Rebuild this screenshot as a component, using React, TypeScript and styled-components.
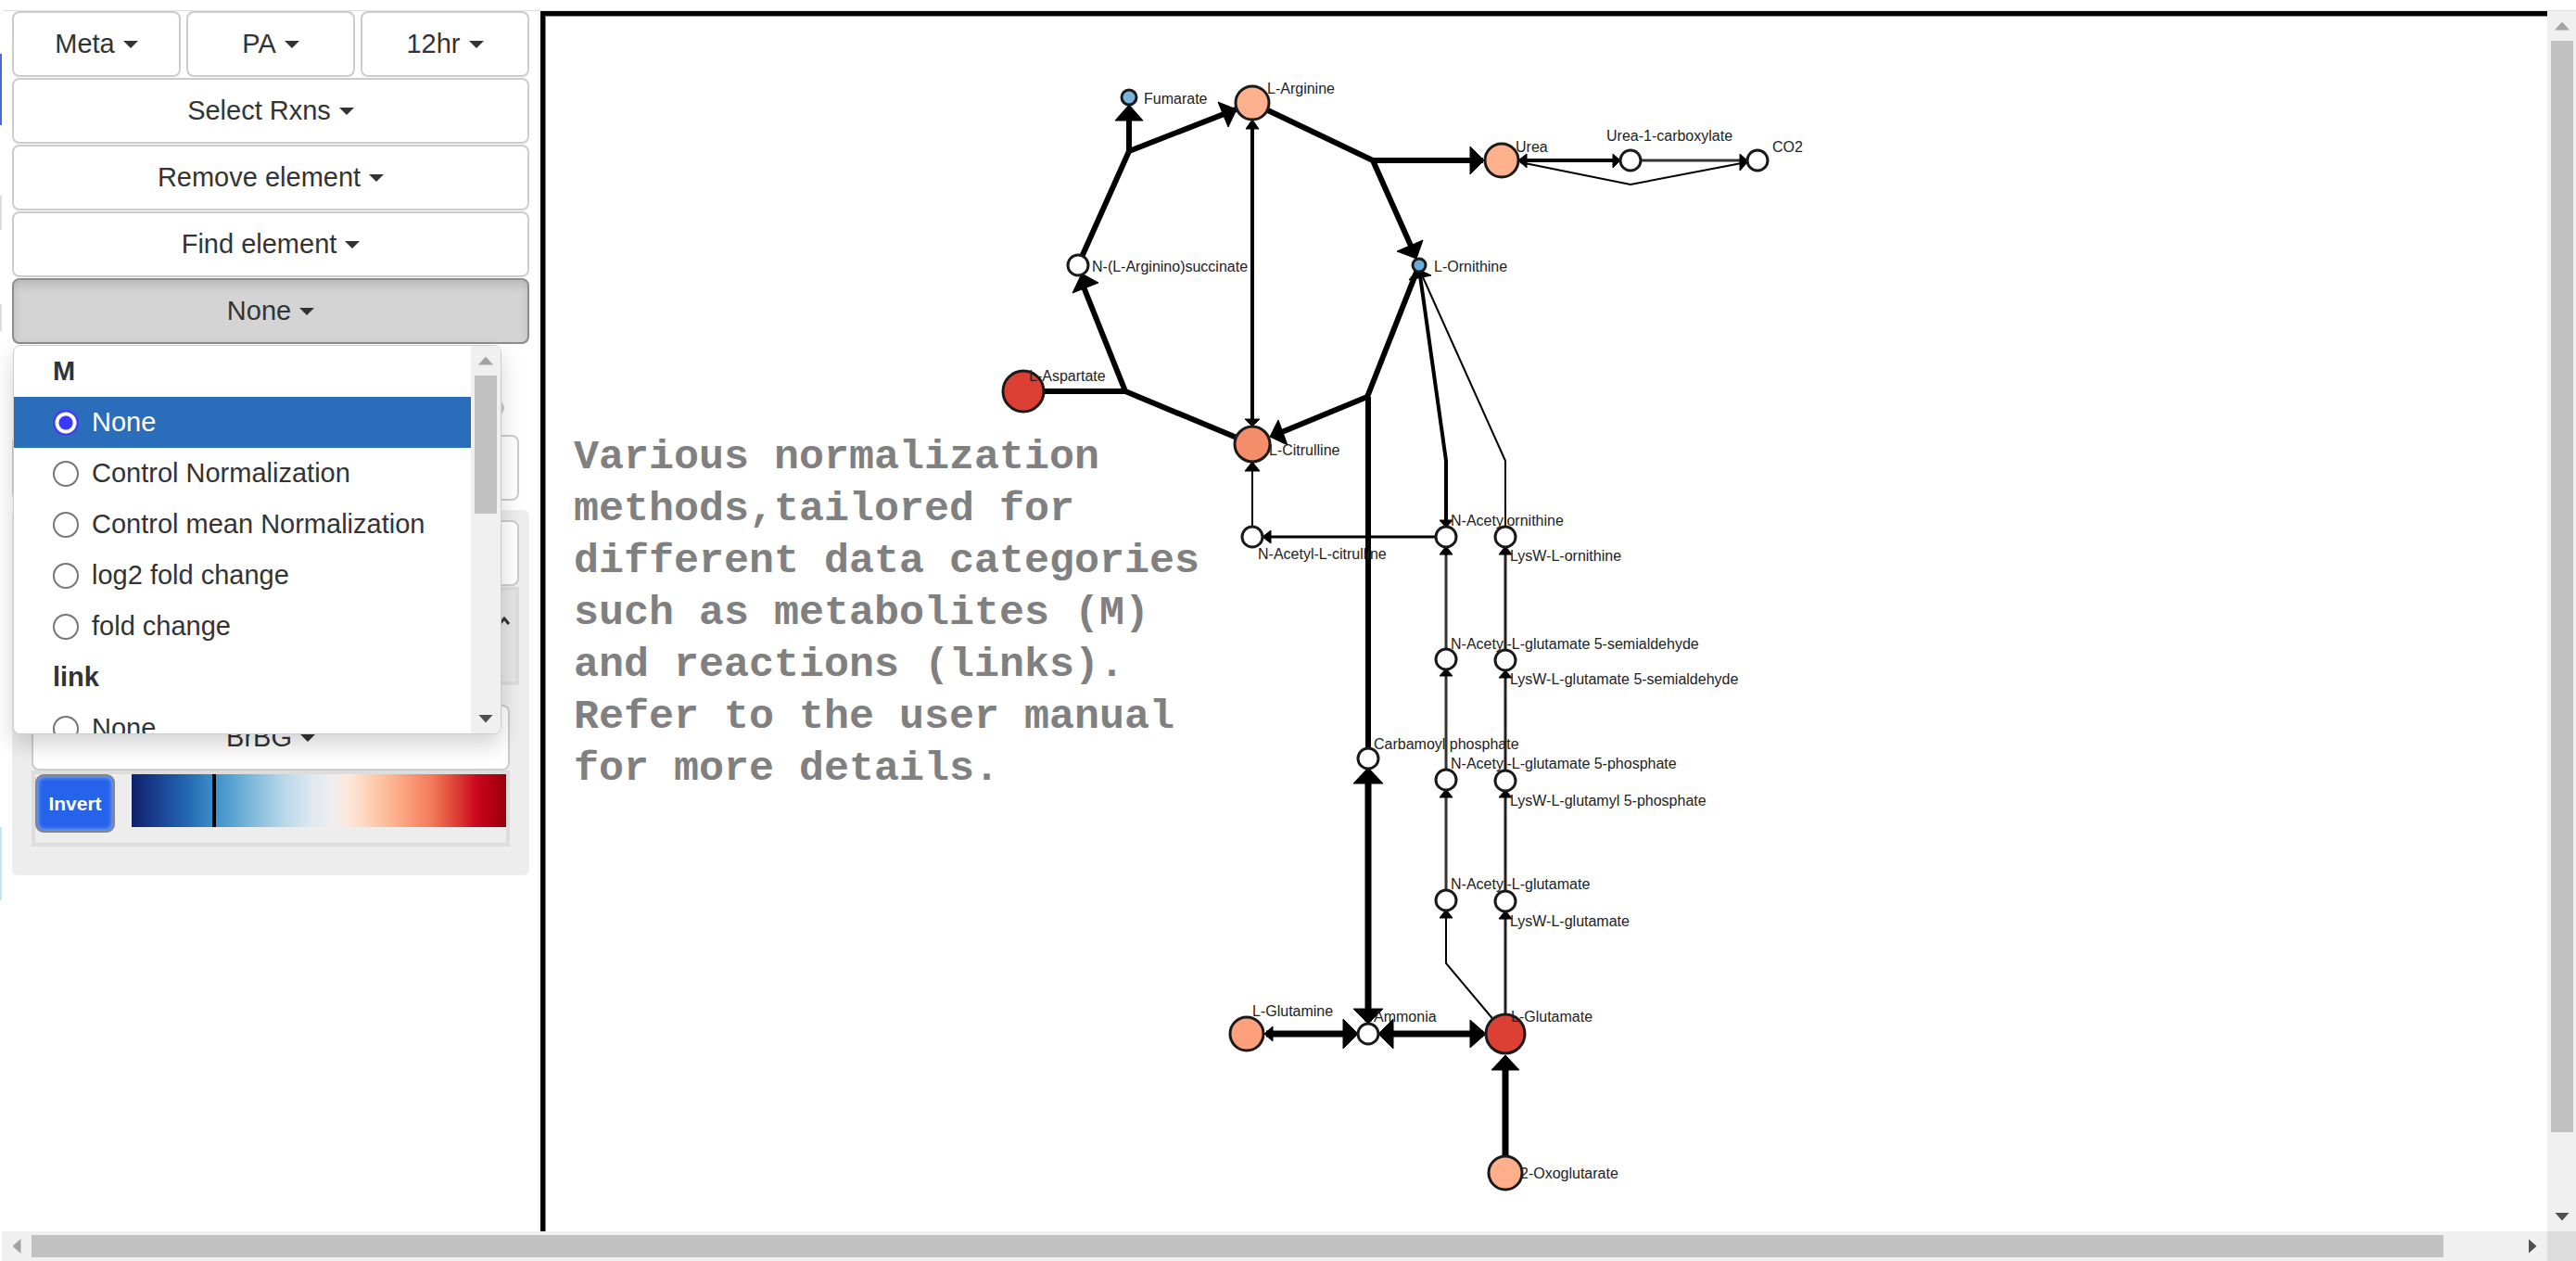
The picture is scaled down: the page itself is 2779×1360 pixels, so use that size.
import React, { useState } from "react";
import styled, { createGlobalStyle, css } from "styled-components";

const sans = `"Liberation Sans", Arial, Helvetica, sans-serif`;

const GlobalStyle = createGlobalStyle`
  *, *::before, *::after { box-sizing: border-box; }
  body { margin: 0; background: #fff; color: #333; font-family: ${sans}; }
`;

const Page = styled.div`
  display: grid;
  grid-template-columns: minmax(0, 1fr) 31px;
  grid-template-rows: 12px minmax(0, 1fr) 32px;
  height: 100vh;
  overflow: hidden;
`;

const TopEdge = styled.div`
  grid-column: 1 / -1;
  margin-left: 3px;
  border-bottom: 1px solid #ddd;
`;

const Workspace = styled.div`
  display: flex;
  min-width: 0;
`;

const EdgeStrip = styled.div`
  display: flex;
  flex-direction: column;
  flex: none;
  width: 2px;
`;

const EdgeMark = styled.span<{ $gap: number; $size: number; $color: string }>`
  flex: none;
  height: ${(p) => p.$size}px;
  margin-top: ${(p) => p.$gap}px;
  background: ${(p) => p.$color};
`;

const Sidebar = styled.aside`
  display: flex;
  flex-direction: column;
  flex: none;
  gap: 1px;
  width: 581px;
  padding: 0 12px 0 11px;
`;

const ButtonRow = styled.div`
  display: grid;
  grid-template-columns: repeat(3, 1fr);
  gap: 6px;
`;

const DropButton = styled.button<{ $open?: boolean }>`
  display: flex;
  align-items: center;
  justify-content: center;
  gap: 9px;
  width: 100%;
  height: 71px;
  padding: 0;
  border: 2px solid #ccc;
  border-radius: 8px;
  background: #fff;
  color: #333;
  font: 29px ${sans};
  white-space: nowrap;

  ${(p) =>
    p.$open &&
    css`
      border-color: #8c8c8c;
      background: #d4d4d4;
      box-shadow: inset 0 6px 10px rgba(0, 0, 0, 0.125);
    `}
`;

const Caret = styled.span`
  border-top: 8px solid currentColor;
  border-right: 8px solid transparent;
  border-left: 8px solid transparent;
`;

const MenuAnchor = styled.div`
  position: relative;
`;

const Menu = styled.div`
  position: absolute;
  z-index: 2;
  top: 100%;
  left: 1px;
  display: flex;
  width: 527px;
  height: 420px;
  margin-top: 1px;
  overflow: hidden;
  border: 1px solid #ccc;
  border-radius: 8px;
  background: #fff;
`;

const MenuShadow = styled.div`
  position: absolute;
  z-index: 1;
  top: 100%;
  left: 1px;
  width: 527px;
  height: 420px;
  border-radius: 8px;
  box-shadow: 0 12px 25px rgba(0, 0, 0, 0.175);
`;

const MenuList = styled.div`
  flex: 1;
  min-width: 0;
  overflow: hidden;
`;

const MenuHeading = styled.div`
  padding-left: 42px;
  font-size: 29px;
  font-weight: bold;
  line-height: 55px;
`;

const MenuItem = styled.label<{ $active: boolean }>`
  display: flex;
  align-items: center;
  gap: 14px;
  height: 55px;
  padding-left: 42px;
  background: ${(p) => (p.$active ? "#2a6ebb" : "#fff")};
  color: ${(p) => (p.$active ? "#fff" : "#333")};
  font-size: 29px;
  line-height: 55px;
  white-space: nowrap;
`;

const Radio = styled.input`
  appearance: none;
  flex: none;
  width: 28px;
  height: 28px;
  margin: 0;
  border: 2px solid #767676;
  border-radius: 50%;
  background: #fff;

  &:checked {
    border-color: #4040f0;
    background: radial-gradient(circle, #3838ff 0 7px, #fff 8px 11px, #4040f0 12px);
  }
`;

const arrowShape = {
  up: "polygon(50% 0, 100% 100%, 0 100%)",
  down: "polygon(0 0, 100% 0, 50% 100%)",
  left: "polygon(0 50%, 100% 0, 100% 100%)",
  right: "polygon(0 0, 100% 50%, 0 100%)",
};

const Track = styled.div<{ $horizontal?: boolean }>`
  display: flex;
  flex: none;
  flex-direction: ${(p) => (p.$horizontal ? "row" : "column")};
  justify-content: space-between;
  width: ${(p) => (p.$horizontal ? "auto" : "32px")};
  margin-left: ${(p) => (p.$horizontal ? "2px" : "0")};
  background: #f0f0f0;
`;

const ArrowButton = styled.button<{ $dir: keyof typeof arrowShape }>`
  display: grid;
  flex: none;
  place-items: center;
  width: 32px;
  height: 32px;
  padding: 0;
  border: 0;
  background: none;

  &::before {
    content: "";
    width: ${(p) => (p.$dir === "up" || p.$dir === "down" ? 16 : 9)}px;
    height: ${(p) => (p.$dir === "up" || p.$dir === "down" ? 9 : 16)}px;
    background: ${(p) => (p.$dir === "up" || p.$dir === "left" ? "#a3a3a3" : "#505050")};
    clip-path: ${(p) => arrowShape[p.$dir]};
  }
`;

const Rail = styled.div<{ $horizontal?: boolean }>`
  display: flex;
  flex: 1;
  flex-direction: ${(p) => (p.$horizontal ? "row" : "column")};
  padding: ${(p) => (p.$horizontal ? "4px 0" : "0 4px")};
`;

const Thumb = styled.div<{ $share: number }>`
  flex: 0 0 ${(p) => p.$share}%;
  background: #c1c1c1;
`;

const Corner = styled.div`
  background: #dcdcdc;
`;

const SizeRow = styled.div`
  display: flex;
  justify-content: flex-end;
  height: 96px;
  padding: 60px 27px 0 0;
`;

const Knob = styled.span`
  width: 16px;
  height: 16px;
  border-radius: 50%;
  background: #ccc;
`;

const Indented = styled.div`
  padding-right: 11px;
`;

const Panel = styled.section`
  height: 394px;
  margin-top: 9px;
  padding: 11px;
  border-radius: 6px;
  background: #ededed;
`;

const LegendHeader = styled.div`
  display: flex;
  justify-content: flex-end;
  height: 106px;
  margin-top: 1px;
  padding: 27px 5px 0 0;
  border: 4px solid #ddd;
  background: #e6e6e6;
`;

const Chevron = styled.svg`
  width: 14px;
  height: 10px;
`;

const Palette = styled.div`
  padding: 21px 10px 0;
`;

const PaletteBox = styled.div`
  display: flex;
  justify-content: space-between;
  align-items: flex-start;
  height: 82px;
  border: 4px solid #ddd;
`;

const InvertButton = styled.button`
  width: 86px;
  height: 63px;
  padding: 0;
  border: 2px solid #858585;
  border-radius: 9px;
  background: #2563eb;
  box-shadow: inset 0 0 5px 1px #8fb0f8;
  color: #fff;
  font: bold 21px ${sans};
`;

const Ramp = styled.div`
  width: 404px;
  height: 57px;
  padding-left: 87px;
  background: linear-gradient(
    to right,
    #10206a 0%,
    #1d4f9f 10%,
    #2468b1 15%,
    #3585c3 20%,
    #4d9bcf 25%,
    #7db9dc 32%,
    #b4d5e9 40%,
    #dfe8f1 48%,
    #f2eeee 54%,
    #fce6da 58%,
    #fdd3b9 63%,
    #feb28f 70%,
    #f99573 75%,
    #f37b5a 80%,
    #e65842 84%,
    #d7332f 88%,
    #cb061d 92%,
    #b50013 96%,
    #93000d 100%
  );
`;

const RampMarker = styled.div`
  width: 4px;
  height: 100%;
  background: #000;
`;

const Canvas = styled.main`
  position: relative;
  flex: 1;
  min-width: 0;
  border: solid #000;
  border-width: 5px 0 0 5px;
  box-shadow: inset 1px 1px 0 #888;
`;

const Diagram = styled.svg`
  display: block;
  width: 100%;
  height: 100%;

  text {
    fill: #222;
    font: 16px ${sans};
  }
`;

const Note = styled.p`
  position: absolute;
  top: 449px;
  left: 31px;
  width: 700px;
  margin: 0;
  color: #808080;
  font: bold 45px / 56px "Liberation Mono", "Courier New", monospace;
`;

type Edge = { points: string; width: number; color?: string };

const edges: Edge[] = [
  { points: "1163,286 1218,163 1351,111", width: 6 },
  { points: "1218,163 1218,118", width: 6 },
  { points: "1351,111 1481,173 1526,274", width: 6 },
  { points: "1481,173 1600,173", width: 6 },
  { points: "1531,286 1475,428 1378,468", width: 6 },
  { points: "1476,428 1476,818", width: 6 },
  { points: "1351,479 1214,422 1166,302", width: 6 },
  { points: "1104,422 1214,422", width: 6 },
  { points: "1351,132 1351,458", width: 4 },
  { points: "1620,173 1745,173", width: 4 },
  { points: "1759,173 1885,173", width: 3, color: "#333" },
  { points: "1640,175 1759,199 1884,175", width: 2 },
  { points: "1531,290 1560,497 1560,566", width: 4 },
  { points: "1531,290 1624,497 1624,579", width: 2 },
  { points: "1560,579 1364,579", width: 3 },
  { points: "1351,579 1351,502", width: 2 },
  { points: "1560,711 1560,592", width: 3, color: "#333" },
  { points: "1624,712 1624,592", width: 3, color: "#222" },
  { points: "1560,841 1560,724", width: 3, color: "#333" },
  { points: "1624,842 1624,725", width: 3, color: "#222" },
  { points: "1560,971 1560,854", width: 3, color: "#333" },
  { points: "1624,972 1624,855", width: 3, color: "#222" },
  { points: "1624,1115 1560,1039 1560,984", width: 2 },
  { points: "1624,1115 1624,985", width: 3, color: "#222" },
  { points: "1476,832 1476,1102", width: 7 },
  { points: "1366,1115 1462,1115", width: 7 },
  { points: "1490,1115 1600,1115", width: 7 },
  { points: "1624,1265 1624,1142", width: 7 },
];

const arrowHeads = [
  "1218,113 1233,130 1203,130",
  "1334,118 1314,110 1325,137",
  "1601,173 1586,158 1586,188",
  "1528,279 1507,271 1535,259",
  "1370,471 1379,453 1389,480",
  "1167,295 1157,316 1185,305",
  "1351,129 1358,139 1344,139",
  "1351,460 1359,452 1343,452",
  "1529,290 1544,297 1520,302",
  "1638,173 1647,166 1647,181",
  "1748,173 1740,166 1740,181",
  "1886,174 1877,166 1877,184",
  "1351,498 1359,508 1343,508",
  "1362,579 1371,572 1371,586",
  "1560,569 1567,561 1553,561",
  "1560,589 1567,598 1553,598",
  "1624,589 1631,598 1617,598",
  "1560,721 1567,729 1553,729",
  "1624,723 1631,731 1617,731",
  "1560,851 1567,860 1553,860",
  "1624,852 1631,860 1617,860",
  "1560,981 1567,990 1553,990",
  "1624,982 1631,991 1617,991",
  "1476,828 1492,845 1460,845",
  "1476,1104 1492,1088 1460,1088",
  "1465,1115 1449,1099 1449,1131",
  "1487,1115 1503,1099 1503,1131",
  "1603,1115 1586,1100 1586,1130",
  "1364,1115 1373,1107 1373,1123",
  "1624,1138 1639,1154 1609,1154",
];

type Node = { x: number; y: number; r: number; fill?: string; label: string; lx: number; ly: number };

const nodes: Node[] = [
  { x: 1218, y: 105, r: 8, fill: "#78b6dd", label: "Fumarate", lx: 1234, ly: 112 },
  { x: 1351, y: 111, r: 18, fill: "#ffb08d", label: "L-Arginine", lx: 1367, ly: 101 },
  { x: 1163, y: 286, r: 11, label: "N-(L-Arginino)succinate", lx: 1178, ly: 293 },
  { x: 1104, y: 422, r: 22, fill: "#dc4034", label: "L-Aspartate", lx: 1110, ly: 411 },
  { x: 1351, y: 479, r: 19, fill: "#f68d6a", label: "L-Citrulline", lx: 1369, ly: 491 },
  { x: 1531, y: 286, r: 7, fill: "#69addb", label: "L-Ornithine", lx: 1547, ly: 293 },
  { x: 1620, y: 173, r: 18, fill: "#ffb08d", label: "Urea", lx: 1635, ly: 164 },
  { x: 1759, y: 173, r: 11, label: "Urea-1-carboxylate", lx: 1733, ly: 152 },
  { x: 1896, y: 173, r: 11, label: "CO2", lx: 1912, ly: 164 },
  { x: 1351, y: 579, r: 11, label: "N-Acetyl-L-citrulline", lx: 1357, ly: 603 },
  { x: 1560, y: 579, r: 11, label: "N-Acetylornithine", lx: 1565, ly: 567 },
  { x: 1624, y: 579, r: 11, label: "LysW-L-ornithine", lx: 1629, ly: 605 },
  { x: 1560, y: 711, r: 11, label: "N-Acetyl-L-glutamate 5-semialdehyde", lx: 1565, ly: 700 },
  { x: 1624, y: 712, r: 11, label: "LysW-L-glutamate 5-semialdehyde", lx: 1629, ly: 738 },
  { x: 1476, y: 818, r: 11, label: "Carbamoyl phosphate", lx: 1482, ly: 808 },
  { x: 1560, y: 841, r: 11, label: "N-Acetyl-L-glutamate 5-phosphate", lx: 1565, ly: 829 },
  { x: 1624, y: 842, r: 11, label: "LysW-L-glutamyl 5-phosphate", lx: 1629, ly: 869 },
  { x: 1560, y: 971, r: 11, label: "N-Acetyl-L-glutamate", lx: 1565, ly: 959 },
  { x: 1624, y: 972, r: 11, label: "LysW-L-glutamate", lx: 1629, ly: 999 },
  { x: 1345, y: 1115, r: 18, fill: "#fea07b", label: "L-Glutamine", lx: 1351, ly: 1096 },
  { x: 1476, y: 1115, r: 11, label: "Ammonia", lx: 1482, ly: 1102 },
  { x: 1624, y: 1115, r: 21, fill: "#dc4034", label: "L-Glutamate", lx: 1630, ly: 1102 },
  { x: 1624, y: 1265, r: 18, fill: "#ffae8b", label: "2-Oxoglutarate", lx: 1640, ly: 1271 },
];

const metaboliteMethods = [
  "None",
  "Control Normalization",
  "Control mean Normalization",
  "log2 fold change",
  "fold change",
];

function Dropdown({ label, open }: { label: string; open?: boolean }) {
  return (
    <DropButton type="button" $open={open} aria-haspopup="listbox" aria-expanded={!!open}>
      <span>{label}</span>
      <Caret />
    </DropButton>
  );
}

function ScrollBar({ horizontal, share }: { horizontal?: boolean; share: number }) {
  return (
    <Track $horizontal={horizontal}>
      <ArrowButton type="button" $dir={horizontal ? "left" : "up"} aria-label="Scroll back" />
      <Rail $horizontal={horizontal}>
        <Thumb $share={share} />
      </Rail>
      <ArrowButton type="button" $dir={horizontal ? "right" : "down"} aria-label="Scroll forward" />
    </Track>
  );
}

function NormalizationMenu() {
  const [method, setMethod] = useState("None");
  return (
    <Menu>
      <MenuList>
        <MenuHeading>M</MenuHeading>
        {metaboliteMethods.map((name) => (
          <MenuItem key={name} $active={name === method}>
            <Radio type="radio" name="metabolite" checked={name === method} onChange={() => setMethod(name)} />
            {name}
          </MenuItem>
        ))}
        <MenuHeading>link</MenuHeading>
        <MenuItem $active={false}>
          <Radio type="radio" name="link" />
          None
        </MenuItem>
      </MenuList>
      <ScrollBar share={42} />
    </Menu>
  );
}

function Pathway() {
  return (
    <Diagram role="img" aria-label="Urea cycle pathway">
      <g transform="translate(-588 -17)">
        {edges.map((e) => (
          <polyline key={e.points} points={e.points} fill="none" stroke={e.color ?? "#000"} strokeWidth={e.width} />
        ))}
        {arrowHeads.map((points) => (
          <polygon key={points} points={points} stroke="#000" strokeWidth={1} />
        ))}
        {nodes.map((n) => (
          <circle key={n.label} cx={n.x} cy={n.y} r={n.r} fill={n.fill ?? "#fff"} stroke="#1a1a1a" strokeWidth={3} />
        ))}
        {nodes.map((n) => (
          <text key={n.label} x={n.lx} y={n.ly}>
            {n.label}
          </text>
        ))}
      </g>
    </Diagram>
  );
}

export default function App() {
  return (
    <>
      <GlobalStyle />
      <Page>
        <TopEdge />
        <Workspace>
          <EdgeStrip>
            <EdgeMark $gap={46} $size={77} $color="#4a68d8" />
            <EdgeMark $gap={76} $size={37} $color="#ddd" />
            <EdgeMark $gap={80} $size={29} $color="#ddd" />
            <EdgeMark $gap={535} $size={79} $color="#c3e4f4" />
          </EdgeStrip>
          <Sidebar>
            <ButtonRow>
              <Dropdown label="Meta" />
              <Dropdown label="PA" />
              <Dropdown label="12hr" />
            </ButtonRow>
            <Dropdown label="Select Rxns" />
            <Dropdown label="Remove element" />
            <Dropdown label="Find element" />
            <MenuAnchor>
              <Dropdown label="None" open />
              <MenuShadow />
              <NormalizationMenu />
            </MenuAnchor>
            <SizeRow>
              <Knob />
            </SizeRow>
            <Indented>
              <DropButton type="button" aria-label="Data column" />
            </Indented>
            <Panel>
              <DropButton type="button" aria-label="Color target" />
              <LegendHeader>
                <Chevron viewBox="0 0 14 10">
                  <path d="M2 9 L7 3 L12 9" fill="none" stroke="#333" strokeWidth="3" />
                </Chevron>
              </LegendHeader>
              <Palette>
                <Dropdown label="BrBG" />
                <PaletteBox>
                  <InvertButton type="button">Invert</InvertButton>
                  <Ramp>
                    <RampMarker />
                  </Ramp>
                </PaletteBox>
              </Palette>
            </Panel>
          </Sidebar>
          <Canvas>
            <Pathway />
            <Note>
              Various normalization methods,tailored for different data categories such as metabolites (M) and
              reactions (links). Refer to the user manual for more details.
            </Note>
          </Canvas>
        </Workspace>
        <ScrollBar share={94} />
        <ScrollBar horizontal share={97} />
        <Corner />
      </Page>
    </>
  );
}
